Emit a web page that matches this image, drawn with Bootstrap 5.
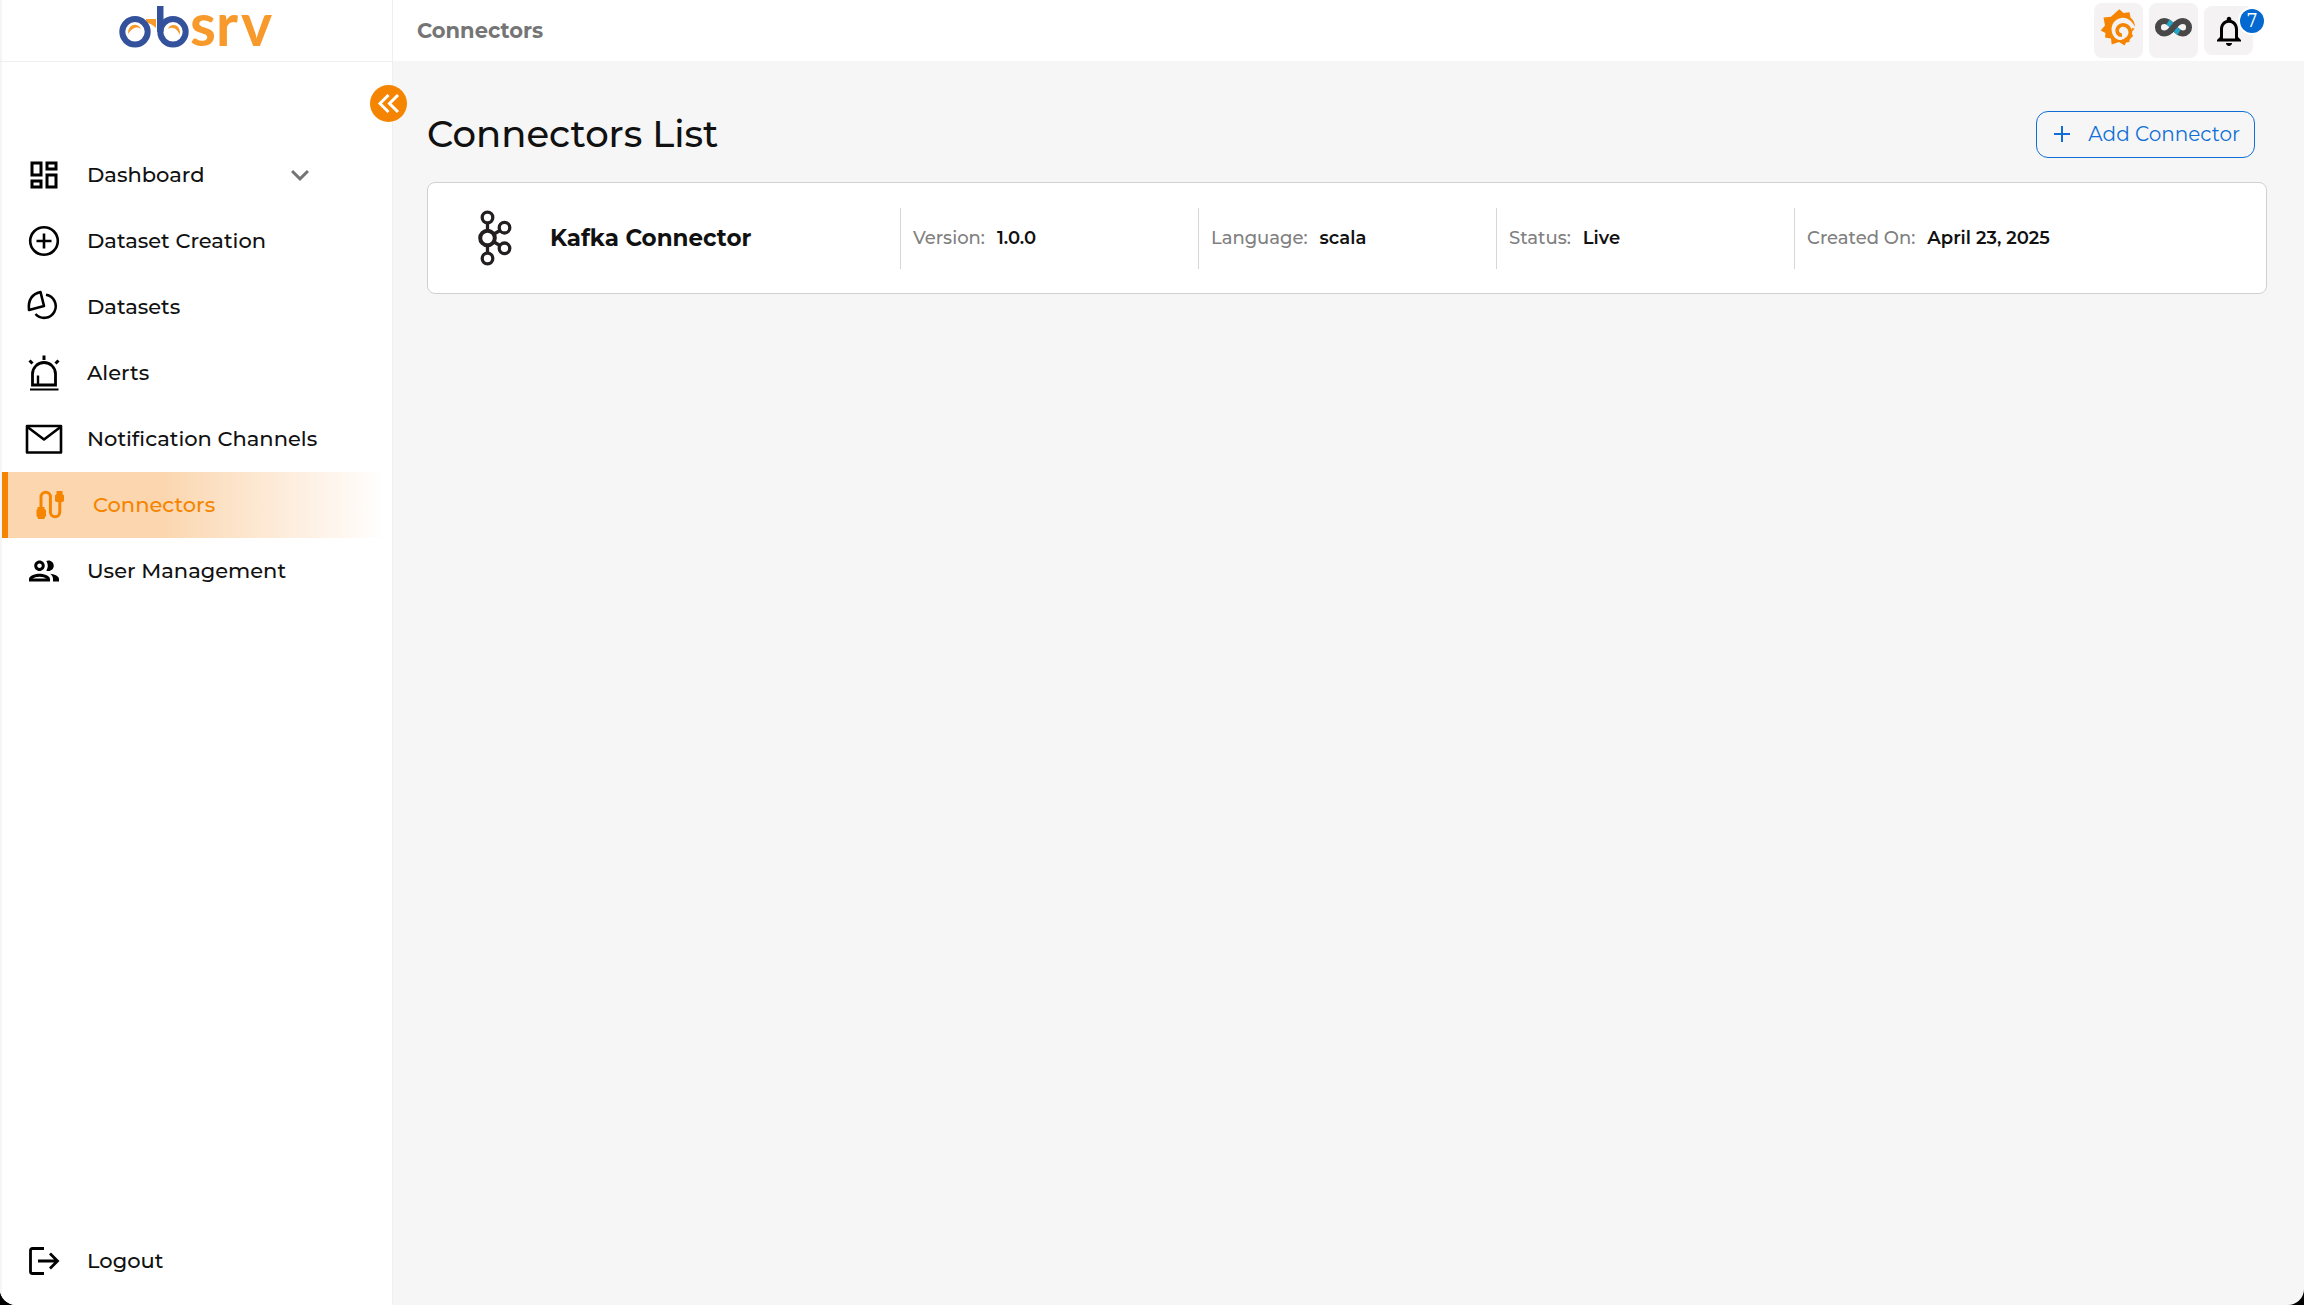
<!DOCTYPE html>
<html lang="en">
<head>
<meta charset="utf-8">
<meta name="viewport" content="width=device-width, initial-scale=1">
<title>Connectors</title>
<link href="https://cdn.jsdelivr.net/npm/bootstrap@5.3.0/dist/css/bootstrap.min.css" rel="stylesheet">
<style>
  :root { --brand: #f58500; --line: #efefef; --action: #0f6fd6; }
  html { background: #000; }
  body { font-family: Montserrat, Inter, "Noto Sans", sans-serif; font-size: 18px; color: #111; background: #000; }
  .app-shell { background: #f6f6f6; border-radius: 0 0 16px 16px; overflow: hidden; }
  .side-col { width: 393px; background: #fff; border-right: 1px solid var(--line); border-left: 2px solid #f5f5f5; }
  .brand-box { height: 62px; border-bottom: 1px solid var(--line); padding-left: 118px; margin-left: -2px; }
  .top-bar { height: 61px; background: #fff; padding: 0 51px 0 24px; }
  .crumb-text { font-size: 21px; font-weight: 700; color: #757575; }
  .collapse-btn { width: 37px; height: 37px; top: 85px; left: 370px; background: var(--brand); z-index: 2; }
  .side-menu { padding-top: 80px; }
  .side-link { height: 66px; padding-left: 24px; gap: 25px; font-size: 21px; font-weight: 500; color: #111; text-decoration: none; }
  .side-link svg { width: 36px; height: 36px; flex: none; overflow: visible; }
  .side-link .chev { margin: 0 74px 0 auto; color: #757575; }
  .side-link.current { color: var(--brand); border-left: 6px solid var(--brand);
    background: linear-gradient(90deg, #fbd6af 0%, #fbd6af 40%, #fff 98%); }
  .side-foot { padding-bottom: 11px; }
  .tool-set { gap: 6px; }
  .tool-btn { width: 49px; height: 55px; border-radius: 8px; background: #f4f2f3; }
  .tool-btn.short { height: 49px; }
  .count-dot { width: 24px; height: 24px; top: 3px; right: -11px; border-radius: 50%; background: #0369d0; color: #fff;
    font: 18px/24px "DejaVu Serif", serif; box-shadow: 0 0 0 2px #fff; }
  .page-area { padding: 49px 37px 0 34px; }
  .page-title { font-size: 37px; line-height: 48px; font-weight: 500; }
  .add-btn { height: 47px; margin-right: 12px; padding: 0 14px 0 13px; gap: 14px; border: 1px solid var(--action); border-radius: 12px;
    background: transparent; color: var(--action); font-size: 20px; font-weight: 400; }
  .conn-card { margin-top: 24px; min-height: 112px; background: #fff; border: 1px solid #d0d0d0; border-radius: 8px;
    display: grid; grid-template-columns: 19fr 12fr 12fr 12fr 19fr; align-items: center; }
  .conn-name { padding-left: 49px; gap: 37px; font-size: 23px; font-weight: 700; }
  .conn-cell { height: 61px; border-left: 1px solid #d6d6d6; padding-left: 12px; gap: 12px; font-size: 18px; }
  .conn-cell dt { font-weight: 500; color: #808080; }
  .conn-cell dd { margin: 0; font-weight: 600; color: #111; }
</style>
<script src="https://cdn.jsdelivr.net/npm/bootstrap@5.3.0/dist/js/bootstrap.bundle.min.js"></script>
</head>
<body>
<div class="app-shell d-flex min-vh-100 position-relative">
  <aside class="side-col d-flex flex-column flex-shrink-0">
    <a class="brand-box d-block" href="#" aria-label="obsrv">
      <svg width="158" height="56" viewBox="118 0 158 56">
        <path d="M146 19h10v9c-3-3-6-5-10-5z" fill="#f7992b"/>
        <g fill="none" stroke="#34529c" stroke-width="6">
          <circle cx="135" cy="31.800" r="12.700"/><circle cx="173" cy="31.800" r="12.700"/>
        </g>
        <path d="M157 6h6.500v26H157z" fill="#34529c"/>
        <path d="M128 34c0-12 11-11 13-5-5-3-9-1-13 5zM180 35c1-12-10-12-12-6 5-3 9 0 12 6z" fill="#f7992b"/>
        <text y="46" x="190 216 241" font-family="Lato, sans-serif" font-weight="700" font-size="59" fill="#f7992b">srv</text>
      </svg>
    </a>
    <nav class="side-menu d-flex flex-column flex-grow-1" aria-label="Main">
      <a class="side-link d-flex align-items-center" href="#">
        <svg viewBox="0 0 24 24" fill="#000"><path d="M19 5v2h-4V5h4M9 5v6H5V5h4m10 8v6h-4v-6h4M9 17v2H5v-2h4M21 3h-8v6h8V3zM11 3H3v10h8V3zm10 8h-8v10h8V11zm-10 4H3v6h8v-6z"/></svg>
        <span>Dashboard</span>
        <svg class="chev" viewBox="0 0 24 24" fill="currentColor"><path d="M7.410 8.590 12 13.170l4.590-4.580L18 10l-6 6-6-6z"/></svg>
      </a>
      <a class="side-link d-flex align-items-center" href="#">
        <svg viewBox="0 0 36 36" fill="none" stroke="#000" stroke-width="2.600"><circle cx="18" cy="18" r="13.800"/><path d="M18 10.500v15M10.500 18h15"/></svg>
        <span>Dataset Creation</span>
      </a>
      <a class="side-link d-flex align-items-center" href="#">
        <svg viewBox="0 0 36 36" fill="none" stroke="#000" stroke-width="2.600" stroke-linejoin="round"><path d="M14.500 3 18 17 3 21C2 11.500 6 5 14.500 3z"/><path d="M20 5.800A11.600 11.600 0 1 1 9.500 25"/></svg>
        <span>Datasets</span>
      </a>
      <a class="side-link d-flex align-items-center" href="#">
        <svg viewBox="0 0 36 36" fill="none" stroke="#000" stroke-width="2.800"><path d="M6.500 30V19a11.500 11.500 0 0 1 23 0v11z"/><path d="M12 29.500v-9" stroke-width="2.400"/><path d="M4 34.500h28.500" stroke-width="2"/><path d="M18 .5V5M3.500 5.500l3 3M32.500 5.500l-3 3" stroke-width="3"/></svg>
        <span>Alerts</span>
      </a>
      <a class="side-link d-flex align-items-center" href="#">
        <svg viewBox="0 0 36 36" fill="none" stroke="#000" stroke-width="2.600" stroke-linejoin="round"><path d="M1 5h34v26.500H1z"/><path d="M1.500 6 18 18.500 34.500 6"/></svg>
        <span>Notification Channels</span>
      </a>
      <a class="side-link current d-flex align-items-center" href="#" aria-current="page">
        <svg viewBox="0 0 36 36" fill="none" stroke="currentColor" stroke-width="3"><path d="M9 23.500V10a4.700 4.700 0 0 1 9.400 0v15a4.700 4.700 0 0 0 9.400 0V11.500"/><g fill="currentColor" stroke="none"><path d="M5.500 20h7v2l1.500 1v6q-1.500 1-1.500 3H6q0-2-1.500-3v-6l1-1zM24.500 4h6v3l1.500 1.500V14l-1.500 1h-6L23 14V8.500L24.500 7z"/></g></svg>
        <span>Connectors</span>
      </a>
      <a class="side-link d-flex align-items-center" href="#">
        <svg viewBox="0 0 24 24" fill="#000"><path d="M9 13.750c-2.340 0-7 1.170-7 3.500V19h14v-1.750c0-2.330-4.660-3.500-7-3.500zM4.340 17c.84-.58 2.870-1.250 4.660-1.250s3.820.67 4.660 1.250H4.340zM9 12c1.930 0 3.500-1.570 3.500-3.500S10.930 5 9 5 5.500 6.570 5.500 8.500 7.070 12 9 12zm0-5c.83 0 1.500.67 1.500 1.500S9.830 10 9 10s-1.500-.67-1.500-1.500S8.170 7 9 7zm7.040 6.810c1.160.84 1.960 1.960 1.960 3.440V19h4v-1.750c0-2.020-3.500-3.170-5.960-3.440zM15 12c1.930 0 3.500-1.570 3.500-3.500S16.930 5 15 5c-.54 0-1.040.13-1.500.35.63.89 1 1.980 1 3.150s-.37 2.260-1 3.150c.46.22.96.35 1.500.35z"/></svg>
        <span>User Management</span>
      </a>
    </nav>
    <div class="side-foot">
      <a class="side-link d-flex align-items-center" href="#">
        <svg viewBox="0 0 36 36" fill="none" stroke="#000" stroke-width="2.800"><path d="M18 5.500H6.500q-2 0-2 2v21q0 2 2 2H18M12 18h19M24 10.500l7.500 7.500-7.500 7.500"/></svg>
        <span>Logout</span>
      </a>
    </div>
  </aside>
  <button class="collapse-btn btn p-0 border-0 rounded-circle position-absolute d-flex align-items-center justify-content-center" type="button" aria-label="Collapse menu">
    <svg width="37" height="37" viewBox="0 0 37 37" fill="none" stroke="#fff" stroke-width="3"><path d="M18.500 10 10 18.500l8.500 8.500M28 10l-8.500 8.500L28 27"/></svg>
  </button>
  <div class="flex-grow-1">
    <header class="top-bar d-flex align-items-center justify-content-between">
      <span class="crumb-text">Connectors</span>
      <div class="tool-set d-flex align-items-center">
        <button class="tool-btn btn p-0 border-0" type="button" aria-label="Grafana">
          <svg class="d-block" width="49" height="55" viewBox="0 0 49 55"><path fill="#f58500" d="M25.300 6.300 29.500 10l6-.7 1 5.200Q41 18 41 25L37 30l2.300 3-4 3 .2 3-3.500.5-1.300 3-5.700-3.500-7.300 2.500-.7-6-6-1 .5-4.500-4.800-2.500 4.300-5-1.500-8 7.500-.700z"/><path fill="#f4f2f3" d="M42 26C38 16.500 32 14 27 15c-7 1.500-10 7-9.300 13 .8 6 5.300 9.500 10.300 9 4-.5 7-3 8.500-6.500L38 25z"/><path fill="none" stroke="#f58500" stroke-width="3.600" d="M31 37c5-2 6.500-7 4.500-11-2.500-4.500-8-5.500-11-2-3 3.800-.5 8.500 3.500 8"/><path fill="#f58500" d="M27 36.500q6 0 9-6l2 3-4 5z"/></svg>
        </button>
        <button class="tool-btn btn p-0 border-0" type="button" aria-label="Superset">
          <svg class="d-block" width="49" height="55" viewBox="0 0 49 55" fill="none" stroke-width="6"><path stroke="#484848" d="M24.500 24.200C20 18.500 17.500 18 15.200 18a6.200 6.200 0 0 0 0 12.500c3.500 0 6.500-2.500 9.300-6.300S30.500 18 33.800 18a6.200 6.200 0 0 1 0 12.500c-3 0-6-2-9.300-6.300z"/><path stroke="#20a7c9" d="M19 19c2 1.200 3.700 3.200 5.500 5.200s3.500 4 5.500 5.200"/><path stroke="#484848" d="M21 28.200c1.500-1.300 2.500-2.500 3.500-4s2.200-2.700 3.500-4"/></svg>
        </button>
        <button class="tool-btn short btn p-0 border-0 position-relative" type="button" aria-label="Notifications, 7 new">
          <svg width="36" height="36" viewBox="0 0 24 24"><path d="M12 22c1.100 0 2-.9 2-2h-4c0 1.100.9 2 2 2zm6-6v-5c0-3.070-1.630-5.640-4.500-6.320V4c0-.83-.67-1.500-1.500-1.500s-1.500.67-1.500 1.500v.68C7.640 5.360 6 7.920 6 11v5l-2 2v1h16v-1l-2-2zm-2 1H8v-6c0-2.480 1.510-4.500 4-4.500s4 2.020 4 4.500v6z"/></svg>
          <span class="count-dot position-absolute">7</span>
        </button>
      </div>
    </header>
    <main class="page-area">
      <div class="d-flex align-items-center justify-content-between">
        <h1 class="page-title m-0">Connectors List</h1>
        <button class="add-btn btn d-flex align-items-center" type="button">
          <svg width="24" height="24" viewBox="0 0 24 24" fill="none" stroke="currentColor" stroke-width="2"><path d="M12 4v16M4 12h16"/></svg>
          <span>Add Connector</span>
        </button>
      </div>
      <section class="conn-card">
        <div class="conn-name d-flex align-items-center">
          <svg width="36" height="58" viewBox="0 0 36 58" fill="none" stroke="#231f20" stroke-width="3.300"><circle cx="10.500" cy="8.500" r="5.300"/><circle cx="10.500" cy="29" r="7.300" stroke-width="4"/><circle cx="10.500" cy="49.500" r="5.300"/><circle cx="27.500" cy="18.700" r="5.300"/><circle cx="27.500" cy="39.300" r="5.300"/><path d="M10.500 13.500v8M10.500 36.500v8M17 25l6-3.500M17 33l6 3.500"/></svg>
          <span>Kafka Connector</span>
        </div>
        <dl class="conn-cell d-flex align-items-center m-0"><dt>Version:</dt><dd>1.0.0</dd></dl>
        <dl class="conn-cell d-flex align-items-center m-0"><dt>Language:</dt><dd>scala</dd></dl>
        <dl class="conn-cell d-flex align-items-center m-0"><dt>Status:</dt><dd>Live</dd></dl>
        <dl class="conn-cell d-flex align-items-center m-0"><dt>Created On:</dt><dd>April 23, 2025</dd></dl>
      </section>
    </main>
  </div>
</div>
</body>
</html>
